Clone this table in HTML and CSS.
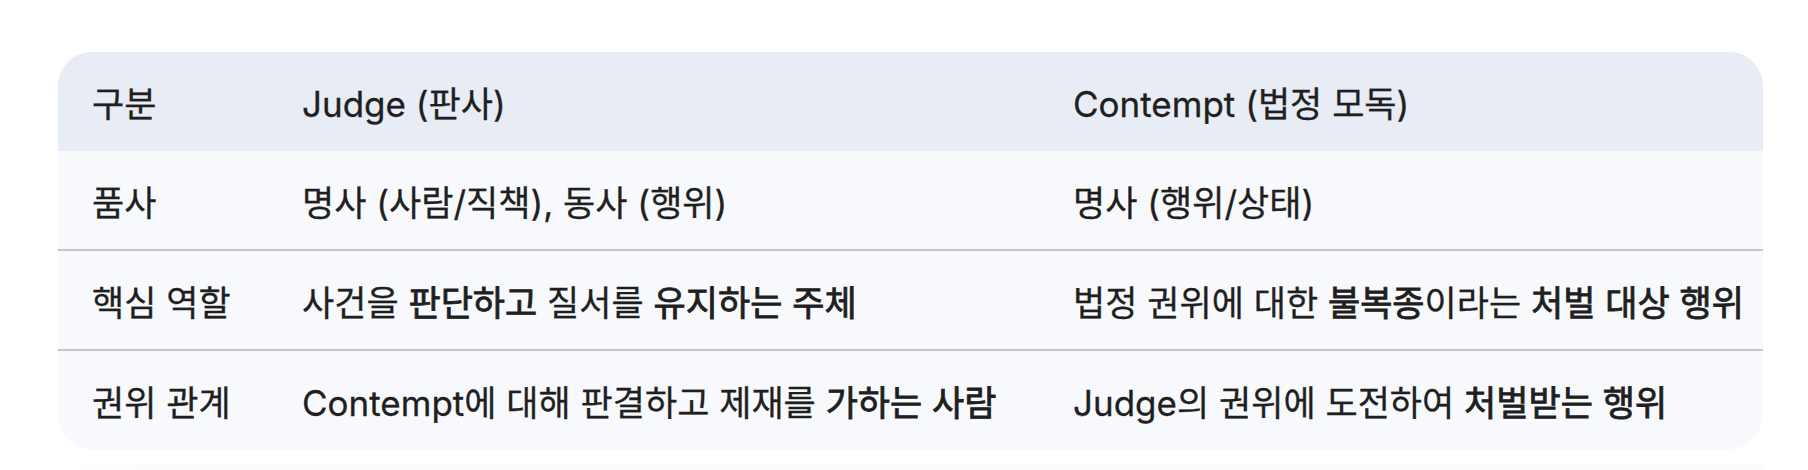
FILE: index.html
```html
<!DOCTYPE html>
<html lang="ko">
<head>
<meta charset="utf-8">
<link rel="stylesheet" href="styles.css">
</head>
<body>
<div class="table">
  <div class="row head">
    <div class="cell">구분</div>
    <div class="cell">Judge (판사)</div>
    <div class="cell">Contempt (법정 모독)</div>
  </div>
  <div class="row">
    <div class="cell">품사</div>
    <div class="cell">명사 (사람/직책), 동사 (행위)</div>
    <div class="cell">명사 (행위/상태)</div>
  </div>
  <div class="row sep">
    <div class="cell">핵심 역할</div>
    <div class="cell">사건을 <b>판단하고</b> 질서를 <b>유지하는 주체</b></div>
    <div class="cell">법정 권위에 대한 <b>불복종</b>이라는 <b>처벌 대상 행위</b></div>
  </div>
  <div class="row sep">
    <div class="cell">권위 관계</div>
    <div class="cell">Contempt에 대해 판결하고 제재를 <b>가하는 사람</b></div>
    <div class="cell">Judge의 권위에 도전하여 <b>처벌받는 행위</b></div>
  </div>
</div>
<div class="shade"></div>
</body>
</html>
```
FILE: styles.css
```css
html, body {
  margin: 0;
  padding: 0;
  background: #ffffff;
}
body {
  padding: 52px 45px 0 58px;
  font-family: "Inter", "Noto Sans CJK KR", sans-serif;
  color: #1f1f1f;
}
.table {
  width: 1705px;
  border-radius: 34px;
  overflow: hidden;
  background: #f8f9fd;
}
.row {
  display: grid;
  grid-template-columns: 210px 771px 1fr;
  height: 98px;
  align-items: center;
}
.row.head {
  background: #e8ecf4;
  height: 99px;
}
.row.sep {
  border-top: 2px solid #c6c7c9;
}
.cell {
  padding-left: 34px;
  font-size: 35px;
  font-weight: 400;
  white-space: nowrap;
  -webkit-text-stroke: 0.3px #1f1f1f;
}
.cell b {
  font-weight: 400;
  -webkit-text-stroke: 0.85px #1f1f1f;
}
.shade {
  margin-top: 15px;
  height: 8px;
  background: linear-gradient(to right, #ffffff 0, #fbfbfb 120px, #fbfbfb 100%);
}
```
